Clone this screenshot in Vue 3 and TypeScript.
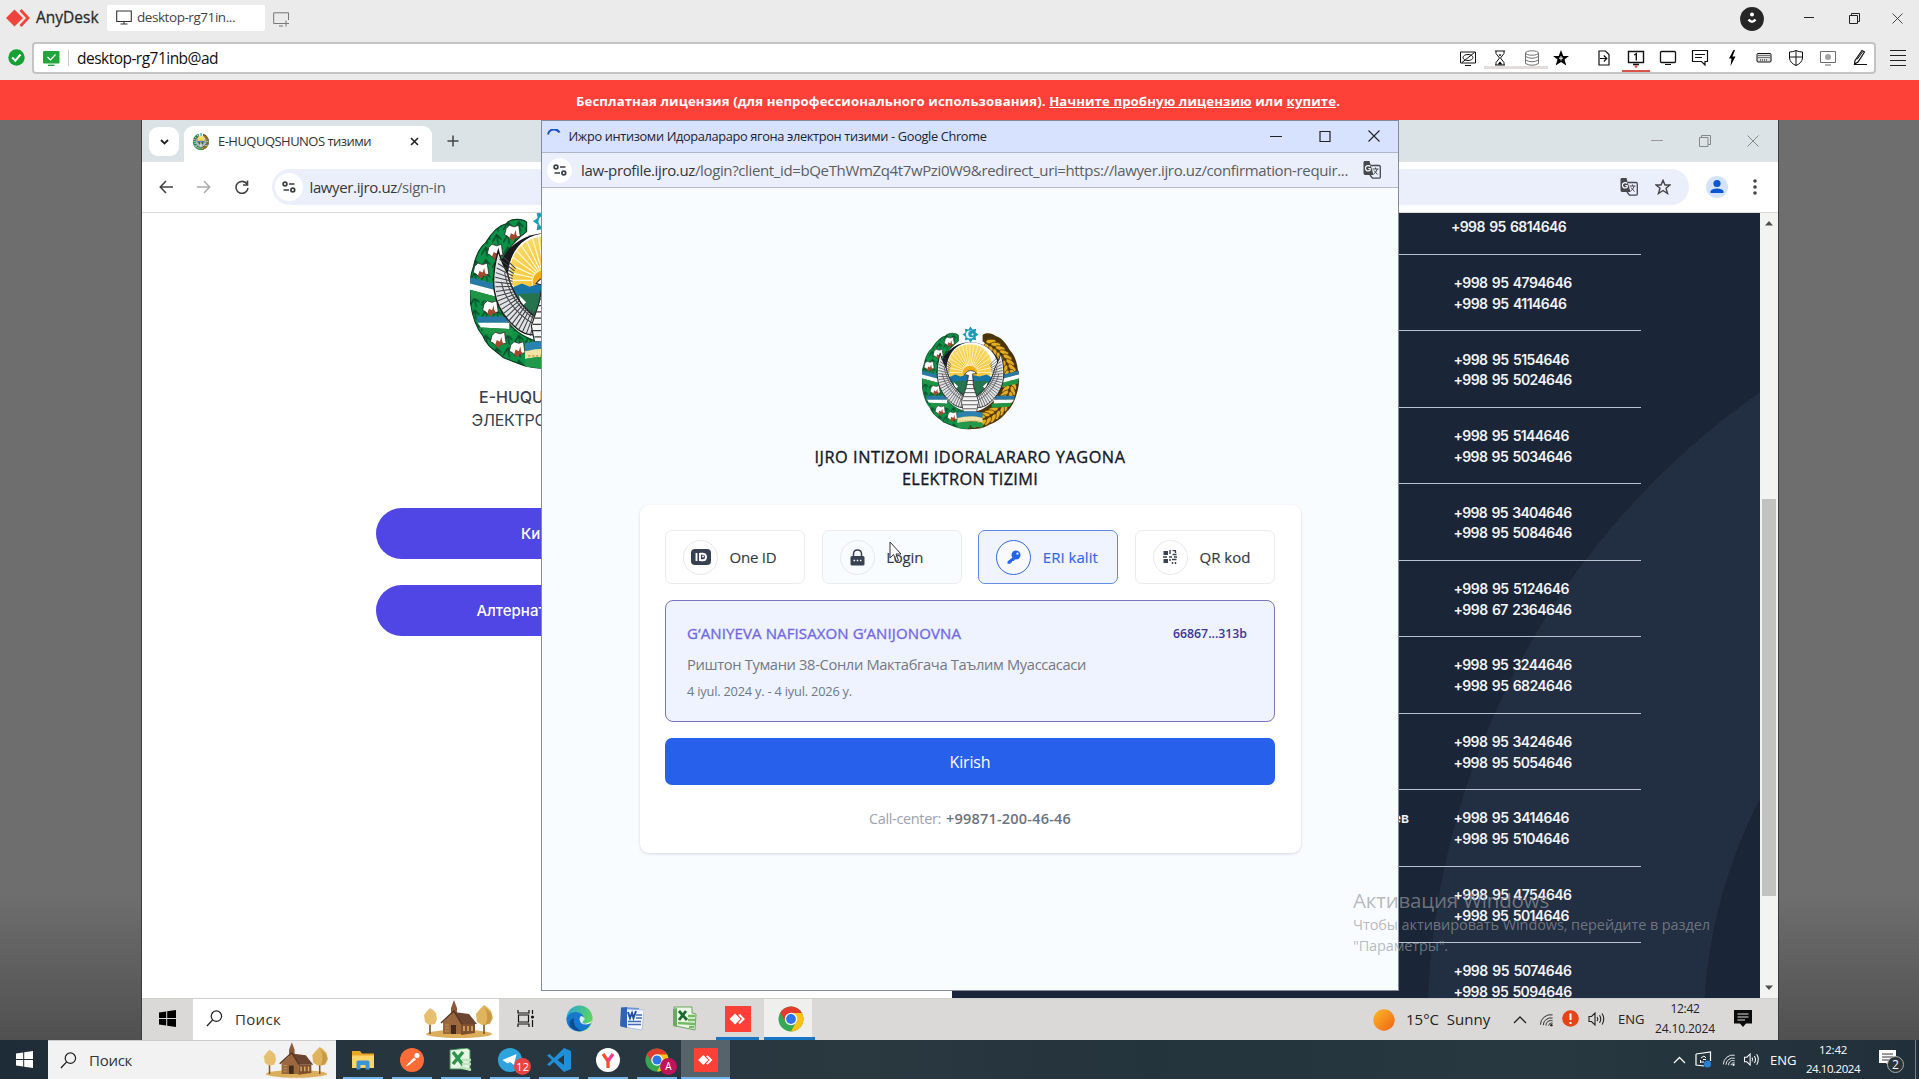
<script setup lang="ts">
import type { DirectiveBinding } from 'vue'

// Spreads a label over a given width by adjusting its letter spacing.
const vFit = {
  mounted(el: HTMLElement, binding: DirectiveBinding<number>) {
    const natural = el.getBoundingClientRect().width
    const count = (el.textContent ?? '').trim().length || 1
    el.style.letterSpacing = `${(binding.value - natural) / count}px`
  },
}

interface PhoneRow {
  name?: string
  phones: string[]
}

const rows: PhoneRow[] = [
  { phones: ['+998 95 4794646', '+998 95 4114646'] },
  { phones: ['+998 95 5154646', '+998 95 5024646'] },
  { phones: ['+998 95 5144646', '+998 95 5034646'] },
  { phones: ['+998 95 3404646', '+998 95 5084646'] },
  { phones: ['+998 95 5124646', '+998 67 2364646'] },
  { phones: ['+998 95 3244646', '+998 95 6824646'] },
  { phones: ['+998 95 3424646', '+998 95 5054646'] },
  { name: 'ев', phones: ['+998 95 3414646', '+998 95 5104646'] },
  { phones: ['+998 95 4754646', '+998 95 5014646'] },
  { phones: ['+998 95 5074646', '+998 95 5094646'] },
]

const phoneWidth = (phone: string): number => 118 - 2.6 * phone.split('1').length + 2.6

const methods = [
  { id: 'one', label: 'One ID', width: 47, state: '' },
  { id: 'lock', label: 'Login', width: 37, state: 'hover' },
  { id: 'key', label: 'ERI kalit', width: 55, state: 'active' },
  { id: 'qr', label: 'QR kod', width: 51, state: '' },
]

// Emblem geometry
const rays = Array.from({ length: 19 }, (_, i) => {
  const a = Math.PI + (i * Math.PI) / 18
  return { x: 47.5 + 24 * Math.cos(a), y: 46 + 30 * Math.sin(a) }
})
const feathers = Array.from({ length: 25 }, (_, i) => {
  const t = i / 24
  const a = Math.PI * (1.14 - t * 0.64)
  return {
    x1: 48 + 21 * Math.cos(a), y1: 47 + 20 * Math.sin(a),
    x2: 48 + 32 * Math.cos(a + 0.06), y2: 47 + 36 * Math.sin(a + 0.06),
  }
})
const cotton = [[27, 16], [16, 28], [7, 40], [13, 64], [18, 84], [30, 90]]
const starPoints = Array.from({ length: 16 }, (_, i) => {
  const r = i % 2 ? 5.4 : 8
  const a = (i * Math.PI) / 8
  return `${48 + r * Math.sin(a)},${8.5 - r * Math.cos(a)}`
}).join(' ')
const wheat = Array.from({ length: 40 }, (_, i) => {
  const k = Math.floor(i / 2)
  const outer = i % 2
  const a = -1.08 + (k / 19) * 2.5
  const r = outer ? 43 : 36
  return {
    x: 48 + r * Math.cos(a), y: 54 + r * Math.sin(a) * 1.02,
    rot: (a * 180) / Math.PI + (outer ? 60 : 120),
  }
})
</script>

<template>
  <div class="screen">
    <svg class="defs" width="0" height="0">
      <defs>
        <pattern id="leaf" width="7" height="8" patternUnits="userSpaceOnUse">
          <rect width="7" height="8" fill="#0b9347" />
          <path d="M0 6L3 1L6 4M3 1L4 7" stroke="#07502b" stroke-width="1" fill="none" />
        </pattern>
        <radialGradient id="sunsky" cx=".5" cy=".6" r=".7">
          <stop offset="0" stop-color="#f6bd22" /><stop offset="1" stop-color="#fae27a" />
        </radialGradient>
        <clipPath id="disc"><circle cx="47.5" cy="40" r="22" /></clipPath>
        <linearGradient id="edgeA" x1="0" y1="0" x2="1" y2=".5">
          <stop offset="0" stop-color="#2aa4dd" /><stop offset="1" stop-color="#5bd75a" />
        </linearGradient>
        <linearGradient id="sunny" x1="0" y1="0" x2="1" y2="1">
          <stop offset="0" stop-color="#fbb829" /><stop offset="1" stop-color="#f06411" />
        </linearGradient>
      </defs>
      <symbol id="emblem" viewBox="0 0 96 103">
        <path d="M36 9C34 7 26 6 23 10C18 11 13 17 10 22C5 26 3 33 2 38C-1 46 0 52 0 58C1 67 3 75 8 81C11 89 17 91 21 95C29 98 35 102 48 102L50 86C30 84 17 70 17 50C17 35 24 24 36 15Z" fill="url(#leaf)" stroke="#0b3a20" stroke-width=".7" />
        <path d="M60 9C63 6 70 7 73 10C80 12 84 19 87 24C92 29 94 36 95 44C97 52 96 60 94 66C92 74 89 80 84 85C79 92 72 96 66 98C60 102 54 102 48 102L46 86C66 84 79 70 79 50C79 35 72 24 60 15Z" fill="#4a350a" />
        <ellipse v-for="(w, i) in wheat" :key="'w' + i" :cx="w.x" :cy="w.y" rx="5" ry="2.2" fill="#e6ae1e" stroke="#4f3606" stroke-width=".7" :transform="`rotate(${w.rot} ${w.x} ${w.y})`" />
        <path d="M0 44L19 49V53L0 48Z" fill="#2878a8" /><path d="M0 48L19 53V57L0 52Z" fill="#fff" /><path d="M0 52L19 57V61L1 57Z" fill="#1f9545" />
        <path d="M4 69H24V73H5Z" fill="#2878a8" /><path d="M5 73H25V77L7 76Z" fill="#fff" /><path d="M7 76L27 77V81L10 80Z" fill="#1f9545" />
        <path d="M96 44L77 49V53L96 48Z" fill="#2878a8" /><path d="M96 48L77 53V57L96 52Z" fill="#fff" /><path d="M96 52L77 57V61L95 57Z" fill="#1f9545" />
        <path d="M92 69H72V73H91Z" fill="#2878a8" /><path d="M91 73H71V77L89 76Z" fill="#fff" /><path d="M89 76L69 77V81L86 80Z" fill="#1f9545" />
        <g v-for="(c, i) in cotton" :key="'c' + i">
          <path :transform="`translate(${c[0]} ${c[1]})`" d="M-4 -3L-2 -5L1 -4L4 -5L4.500 -1L5 2L1 3Q-1 5 -3 2L-5 1Z" fill="#fff" stroke="#222" stroke-width=".5" />
          <path :transform="`translate(${c[0]} ${c[1]})`" d="M-2 3L-1 0L1 1L2 -2L2.500 1L4 3L1.500 3L0 5Z" fill="#a3492d" />
        </g>
        <circle cx="47.8" cy="47" r="31" fill="#17191c" />
        <path d="M48.500 16C68 17 77 32 76 48C74 66 62 75 48 77C34 74 25 64 24 46C24 28 33 17 48.500 16Z" fill="#fff" />
        <g clip-path="url(#disc)">
          <rect x="22" y="16" width="52" height="52" fill="url(#sunsky)" />
          <path v-for="(r, i) in rays" :key="'r' + i" :d="`M47.5 46L${r.x} ${r.y}`" stroke="#fff8d8" stroke-width=".8" />
          <circle cx="47.5" cy="47" r="8" fill="#f3ae1a" stroke="#fff1ab" stroke-width=".8" />
        </g>
        <path d="M26 51L33 48L38 50L44 48L52 49L57 50L64 48L71 52V59H26Z" fill="#1775a6" />
        <path d="M26 56Q36 53 47 55Q60 53 71 56L67 68L55 73H42L30 68Z" fill="#24744d" />
        <path d="M32 57L35 60L33 62ZM64 57L61 60L63 62Z" stroke="#fff" fill="#fff" />
        <g v-for="side in [1, -1]" :key="'s' + side" :transform="side === 1 ? '' : 'translate(96 0) scale(-1 1)'">
          <path d="M18 27C13 45 13 62 28 75C34 81 41 82 46 79L46 72C36 67 27 56 24 42C21 36 19 31 18 27Z" fill="#e2e3e5" stroke="#1a1a1a" stroke-width=".9" />
          <path v-for="(f, i) in feathers" :key="i" :d="`M${f.x1} ${f.y1}L${f.x2} ${f.y2}`" stroke="#3b3d40" stroke-width=".65" />
          <path d="M22 41C24 54 32 66 45 73M20 47C22 59 32 70 45 76" stroke="#4a4c4f" stroke-width=".7" fill="none" />
        </g>
        <path d="M42 48Q45 44 48 44L52 45L54 47L50 47.500L51 60L56 75L54 85H41L39 75L44 60L46 49Z" fill="#f5f5f5" stroke="#222" stroke-width=".7" />
        <path d="M44 54h7M44 58h7M43 62h10M42 66h11M41 70h13M40 74h15M40 78h15M41 82h13" stroke="#3b3b3b" stroke-width=".8" />
        <path d="M35 86Q48 83 60 86V91Q48 88 35 91Z" fill="#2a82b0" />
        <path d="M35 91Q48 88 60 91V95.500Q48 93 35 96Z" fill="#efe3a9" />
        <path d="M35 96Q48 93 60 96V101Q55 99 50 101L48 98L45 102L35 101Z" fill="#21984a" />
        <path d="M37 94H58" stroke="#c8ae50" stroke-width="1" stroke-dasharray="1.5 1" />
        <polygon :points="starPoints" fill="#149fb6" />
        <circle cx="47.500" cy="8.500" r="4" fill="#e9f7fa" /><circle cx="49" cy="8" r="3.200" fill="#149fb6" /><circle cx="50" cy="8.500" r="1" fill="#fff" />
      </symbol>
      <symbol id="church" viewBox="0 0 71 38">
        <ellipse cx="36" cy="34" rx="33" ry="4" fill="#dcae5b" />
        <path d="M7 22V34M61 21V34" stroke="#7b5326" stroke-width="1.600" />
        <path d="M7 8L4 11L1 15L2 22L6 25L12 24L14 19L13 13L10 10Z" fill="#e6c06e" />
        <path d="M61 5L57 9L53 14L54 22L59 25L67 24L70 18L68 11L64 7Z" fill="#dfb45c" />
        <path d="M61 7C65 12 65 20 62 25C68 24 70 18 68 13Z" fill="#c99843" />
        <path d="M31 0L34 8V16H28V8Z" fill="#8d5b39" />
        <path d="M20 22L31 12L38 22V34H20Z" fill="#9b683d" />
        <path d="M31 12L46 14L54 24H38Z" fill="#6b4530" />
        <path d="M38 24H52V33L38 35Z" fill="#80502e" />
        <path d="M18 23L31 11L39 24" fill="none" stroke="#5b3827" stroke-width="1.600" />
        <path d="M28 25h5v9h-5Z" fill="#442a1b" /><path d="M41 26v5M45 26v5M49 26v5" stroke="#e0b06c" stroke-width="1.500" />
        <path d="M22 25h4M22 28h4M22 31h4" stroke="#c58e59" />
      </symbol>
      <symbol id="chrome" viewBox="0 0 26 26">
        <circle cx="13" cy="13" r="12.500" fill="#34a853" />
        <path d="M13 13L2.200 6.700A12.500 12.500 0 0 1 23.800 6.700Z" fill="#e33b2e" />
        <path d="M13 7H24A12.500 12.500 0 0 1 13 25.500L18.500 15Z" fill="#fbc116" />
        <path d="M2.200 6.700L7.800 16L13 7Z" fill="#e33b2e" />
        <circle cx="13" cy="13" r="6.200" fill="#fff" /><circle cx="13" cy="13" r="4.900" fill="#2c76e8" />
      </symbol>
      <symbol id="anydesk" viewBox="0 0 26 26">
        <rect width="26" height="26" fill="#fb4035" /><path d="M4.500 13L10 7.500L15.500 13L10 18.500Z" fill="#fff" />
        <path d="M14 8.500L18.500 13L14 17.500" stroke="#fff" stroke-width="2" fill="none" />
      </symbol>
      <symbol id="translate" viewBox="0 0 18 18">
        <path d="M1.500 0H6.500L10.500 14H2Q.5 14 .5 12V1.500Q.5 0 1.500 0Z" fill="#46494d" />
        <path d="M8 4.500H16Q17.300 4.500 17.300 6V16Q17.300 17.200 16 17.200H9.500L7 14" fill="none" stroke="#46494d" stroke-width="1.300" />
        <path d="M7.200 5.500A2.700 2.700 0 1 0 7.200 9V7.500H5.200" fill="none" stroke="#fff" stroke-width="1.200" />
        <path d="M9.500 8H15.500M12.500 6.500V8M14.300 8Q13 12 10.500 13M11 9.500L14.500 13.500" fill="none" stroke="#46494d" stroke-width="1" />
      </symbol>
      <symbol id="tune" viewBox="0 0 14 12">
        <g fill="none" stroke="#3c4043" stroke-width="1.700"><circle cx="3" cy="3" r="1.900" /><path d="M7 3H12.500M1.500 9H7" /><circle cx="10.800" cy="9" r="1.900" /></g>
      </symbol>
      <symbol id="wifi" viewBox="0 0 16 16">
        <g fill="none" stroke="currentColor" stroke-width="1"><path d="M1.500 13A11 11 0 0 1 14.500 2.500" /><path d="M4.500 13.500A8 8 0 0 1 14.500 6" /><path d="M7.500 14A5 5 0 0 1 14.500 9" /><path d="M10.300 14A3 3 0 0 1 14.500 11.500" /></g>
        <circle cx="13.200" cy="13.500" r="1.300" fill="currentColor" />
      </symbol>
      <symbol id="speaker" viewBox="0 0 18 16">
        <path d="M1 5.500H3.500L7 2V14L3.500 10.500H1Z M9 6Q10.500 8 9 10M11.500 4.200Q14 8 11.500 11.800M14 2.500Q17.500 8 14 13.500" fill="none" stroke="currentColor" stroke-width="1.100" />
      </symbol>
      <symbol id="magnifier" viewBox="0 0 18 18">
        <circle cx="11" cy="6.500" r="5.500" fill="none" stroke="#222" stroke-width="1.300" /><path d="M7 10.500L1 17" stroke="#222" stroke-width="1.400" />
      </symbol>
      <symbol id="windows" viewBox="0 0 17 17">
        <path d="M0 2.500L7.200 1.400V8H0ZM8.200 1.200L17 0V8H8.200ZM0 9H7.200V15.600L0 14.500ZM8.200 9H17V17L8.200 15.800Z" fill="currentColor" />
      </symbol>
    </svg>

    <!-- AnyDesk frame -->
    <header class="frame">
      <div class="titlebar">
        <svg class="brand-mark" width="24" height="18" viewBox="0 0 24 18"><path d="M0 9L8.500 .5L17 9L8.500 17.500Z" fill="#ef443b" /><path d="M14.500 1L22 9L14.500 17" fill="none" stroke="#ef443b" stroke-width="2.800" /></svg>
        <span v-fit="60" class="brand">AnyDesk</span>
        <div class="session-tab">
          <svg width="16" height="15" viewBox="0 0 16 15"><path d="M.7 1H15.300V11.500H.7ZM8 11.500V14M4.500 14H11.500" fill="none" stroke="#333" stroke-width="1.100" /></svg>
          <span v-fit="98">desktop-rg71in...</span>
        </div>
        <svg class="new-session" width="17" height="15" viewBox="0 0 17 15"><path d="M11 11.500H.7V.8H15.500V8M6 14H10M13 8.500V14.500M10.500 11.500H16" fill="none" stroke="#777" /></svg>
        <div class="host-controls">
          <svg width="26" height="26" viewBox="0 0 26 26"><circle cx="13" cy="13" r="11.900" fill="#262626" /><circle cx="13" cy="8.500" r="2" fill="#fff" /><path d="M9.500 13.500Q13 18 16.500 13.500" fill="none" stroke="#fff" stroke-width="2.600" /></svg>
          <svg class="c-min" width="10" height="12" viewBox="0 0 10 12"><path d="M0 5.500H10" stroke="#222" /></svg>
          <svg class="c-res" width="11" height="11" viewBox="0 0 11 11"><path d="M.5 2.500H8.500V10.500H.5ZM2.500 2.500V.5H10.500V8.500H8.500" fill="none" stroke="#222" /></svg>
          <svg class="c-close" width="11" height="11" viewBox="0 0 11 11"><path d="M.5 .5L10.500 10.500M10.500 .5L.5 10.500" stroke="#333" stroke-width=".9" /></svg>
        </div>
      </div>
      <div class="address-row">
        <svg class="ok" width="17" height="17" viewBox="0 0 17 17"><circle cx="8.500" cy="8.500" r="8.200" fill="#17a034" /><path d="M4.200 8.500L7.300 11.700L12.500 5.500" fill="none" stroke="#fff" stroke-width="2" /></svg>
        <div class="address">
          <svg width="17" height="15" viewBox="0 0 17 15"><rect width="16.500" height="12.500" rx="1" fill="#21a63b" /><path d="M4.500 6L7.500 9L12.500 3.500" fill="none" stroke="#fff" stroke-width="1.200" /><path d="M5 14.300H11.500" stroke="#21a63b" stroke-width="1.400" /></svg>
          <i class="bar"></i>
          <span v-fit="141" class="host">desktop-rg71inb@ad</span>
          <div class="tools">
            <b><svg viewBox="0 0 20 20"><path d="M2.500 4H17.500V15H2.500ZM7 17.500H13M4 14.500L16.500 4.500" /><ellipse cx="10" cy="9.500" rx="5" ry="3" /></svg></b>
            <b class="shade"><svg viewBox="0 0 20 20"><path d="M5 3H15M5 17H15M6 3V5.500L9.500 10L6 14.500V17M14 3V5.500L10.500 10L14 14.500V17" /><path d="M7.500 16.500L10 13.500L12.500 16.500ZM8.500 6.500H11.500L10 8.500Z" fill="#000" stroke="none" /></svg></b>
            <b class="shade dim"><svg viewBox="0 0 20 20"><ellipse cx="10" cy="5" rx="6.500" ry="2.200" /><path d="M3.500 5V15.500Q10 19 16.500 15.500V5M3.500 8.500Q10 12 16.500 8.500M3.500 12Q10 15.500 16.500 12" /></svg></b>
            <b class="star"><svg viewBox="0 0 20 20"><path d="M10 2L12.300 8H18L13.500 11.500L15.300 17.500L10 14L4.700 17.500L6.500 11.500L2 8H7.700Z" fill="#000" stroke="none" /><path d="M10 8V12.500M8 10.200H12" stroke="#fff" /></svg></b>
            <b class="gap"><svg viewBox="0 0 20 20"><path d="M5 3H11.500L15 6.500V17H5ZM6 10.500H12.500M9.800 7.500L12.800 10.500L9.800 13.500" stroke-width="1.200" /></svg></b>
            <b class="current"><svg viewBox="0 0 20 20"><path d="M2.500 3.500H17.500V14.500H2.500ZM7 16.500H13M8.200 7L10.300 5.800V12.500" stroke-width="1.400" /><circle cx="10" cy="18.500" r="1.300" fill="#d94b41" stroke="none" /></svg></b>
            <b><svg viewBox="0 0 20 20"><rect x="2.500" y="3.500" width="15" height="11" rx="1" stroke-width="1.300" /><path d="M7 16.500H13" /></svg></b>
            <b><svg viewBox="0 0 20 20"><path d="M2.500 2.500H17.500V13.500H15V17L11.500 13.500H2.500ZM5 6.500H15M5 9.500H12" stroke-width="1.200" /></svg></b>
            <b><svg viewBox="0 0 20 20"><path d="M11.500 2L7 10.500H9.500L8.500 18L13.500 8.500H10.500L13 2Z" fill="#000" stroke="none" /></svg></b>
            <b><svg viewBox="0 0 20 20"><rect x="3" y="5.500" width="14" height="8.500" rx="1" fill="#ddd" /><path d="M4.500 7.500H15.500M4.500 9.500H15.500M6 12H14" stroke-dasharray="1 1" /></svg></b>
            <b><svg viewBox="0 0 20 20"><path d="M3.500 4Q7 4 10 2.500Q13 4 16.500 4V10Q16 15 10 17.500Q4 15 3.500 10ZM10 2.500V17.500M3.500 9H16.500" /></svg></b>
            <b class="dim"><svg viewBox="0 0 20 20"><path d="M2.500 3.500H17.500V14.500H2.500ZM7 17H13" /><circle cx="10" cy="9" r="3" fill="#666" stroke="none" /></svg></b>
            <b><svg viewBox="0 0 20 20"><path d="M5 12.500L12 2.500L14.500 4L8 14L4.500 16ZM4 16.500H17" stroke-width="1.200" /><path d="M7 11.500L12.500 4" /></svg></b>
          </div>
        </div>
        <svg class="burger" width="16" height="17" viewBox="0 0 16 17"><path d="M0 .5H16M0 5.500H16M0 10.500H16M0 15.500H16" stroke="#222" stroke-width="1" /></svg>
      </div>
      <div class="license"><span v-fit="764">Бесплатная лицензия (для непрофессионального использования). <u>Начните пробную лицензию</u> или <u>купите</u>.</span></div>
    </header>

    <!-- Remote desktop -->
    <main class="stage">
      <section class="remote">
        <div class="tabstrip">
          <span class="tab-search"><svg width="9" height="6" viewBox="0 0 9 6"><path d="M1 1L4.500 4.500L8 1" fill="none" stroke="#222" stroke-width="1.800" /></svg></span>
          <div class="tab">
            <svg width="16" height="17"><use href="#emblem" /></svg>
            <span v-fit="153">E-HUQUQSHUNOS тизими</span>
            <svg class="x" width="9" height="9" viewBox="0 0 9 9"><path d="M1 1L8 8M8 1L1 8" stroke="#222" stroke-width="1.600" /></svg>
          </div>
          <svg class="plus" width="12" height="12" viewBox="0 0 12 12"><path d="M6 .5V11.500M.5 6H11.500" stroke="#444" stroke-width="1.500" /></svg>
          <div class="wincontrols">
            <svg width="12" height="12" viewBox="0 0 12 12"><path d="M0 5.500H12" stroke="#999" /></svg>
            <svg width="12" height="12" viewBox="0 0 12 12"><path d="M.5 2.500H9V11.500H.5ZM2.500 2.500V.5H11.500V9.500H9" fill="none" stroke="#888" /></svg>
            <svg width="12" height="12" viewBox="0 0 12 12"><path d="M.5 .5L11.500 11.500M11.500 .5L.5 11.500" stroke="#888" /></svg>
          </div>
        </div>
        <div class="toolbar">
          <svg class="nav" width="14" height="14" viewBox="0 0 14 14"><path d="M14 7H1.500M7 1L1.300 7L7 13" fill="none" stroke="#444" stroke-width="1.600" /></svg>
          <svg class="nav" width="14" height="14" viewBox="0 0 14 14"><path d="M0 7H12.500M7 1L12.700 7L7 13" fill="none" stroke="#aaa" stroke-width="1.500" /></svg>
          <svg class="nav" width="14" height="14" viewBox="0 0 14 14"><path d="M12 4A6 6 0 1 0 13 8M12.500 .5V5H8" fill="none" stroke="#444" stroke-width="1.600" /></svg>
          <div class="omnibox">
            <span class="site"><svg width="14" height="12"><use href="#tune" /></svg></span>
            <span v-fit="136" class="url">lawyer.ijro.uz<em>/sign-in</em></span>
            <svg class="tr" width="18" height="18"><use href="#translate" /></svg>
            <svg width="16" height="16" viewBox="0 0 16 16"><path d="M8 1.300L10 6H15L11 9.300L12.500 14.500L8 11.500L3.500 14.500L5 9.300L1 6H6Z" fill="none" stroke="#444" stroke-width="1.400" /></svg>
          </div>
          <svg class="avatar" width="22" height="22" viewBox="0 0 22 22"><circle cx="11" cy="11" r="11" fill="#d3e3fd" /><circle cx="11" cy="7.500" r="3.600" fill="#0b57d0" /><path d="M4.500 17V15Q6 12.500 11 12.500Q16 12.500 17.500 15V17Z" fill="#0b57d0" /></svg>
          <svg class="dots" width="4" height="16" viewBox="0 0 4 16"><circle cx="2" cy="2" r="1.800" fill="#444" /><circle cx="2" cy="8" r="1.800" fill="#444" /><circle cx="2" cy="14" r="1.800" fill="#444" /></svg>
        </div>

        <div class="page">
          <div class="signin">
            <svg class="big-emblem" width="151" height="162"><use href="#emblem" /></svg>
            <p class="sys"><span>E-HUQUQSHUNOS</span></p>
            <p class="sys thin"><span>ЭЛЕКТРОН ТИЗИМИ</span></p>
            <div class="cta first"><span>Кириш</span></div>
            <div class="cta"><span>Алтернатив кириш</span></div>
          </div>
          <div class="contacts">
            <div class="row head"><div class="phones"><span v-fit="115">+998 95 6814646</span></div></div>
            <div v-for="(row, i) in rows" :key="i" class="row">
              <div class="who">{{ row.name }}</div>
              <div class="phones"><span v-for="p in row.phones" :key="p" v-fit="phoneWidth(p)">{{ p }}</span></div>
            </div>
          </div>
          <div class="scrollbar">
            <svg width="10" height="6" viewBox="0 0 10 6"><path d="M1 5.500L5 1L9 5.500Z" fill="#505050" /></svg>
            <i></i>
            <svg width="10" height="6" viewBox="0 0 10 6"><path d="M1 .5L5 5L9 .5Z" fill="#505050" /></svg>
          </div>
        </div>

        <div class="taskbar remote-bar">
          <span class="start"><svg width="17" height="17"><use href="#windows" /></svg></span>
          <div class="search">
            <svg width="17" height="17"><use href="#magnifier" /></svg><span v-fit="46">Поиск</span>
            <svg class="church" width="71" height="38"><use href="#church" /></svg>
          </div>
          <div class="apps">
            <b class="taskview"><svg width="18" height="17" viewBox="0 0 18 17"><path d="M1 0V3H12V0M1 17V14H12V17M1.500 5H11.500V12H1.500ZM15.500 0V4M15.500 10V17" fill="none" stroke="#111" stroke-width="1.200" /><circle cx="15.500" cy="7" r="1.600" fill="#111" /></svg></b>
            <b><svg width="27" height="27" viewBox="0 0 27 27"><circle cx="13.500" cy="13.500" r="13" fill="url(#edgeA)" /><path d="M.5 14Q2 7 10 7Q18 8 18 14Q18 16 16 17Q19 20 25 18Q21 26.500 13 26.500Q1 25 .5 14Z" fill="#1678cf" /><path d="M8 13Q6 22 16 26Q8 26.500 4 21Q2 15 8 13Z" fill="#0d4d94" /><path d="M15 11Q19 12 18.500 14.500Q17 16 16.500 17.500Q19 20 26 16L25 18Q19 21 15 18Q12 14 15 11Z" fill="#fff" opacity=".85" /></svg></b>
            <b><svg width="24" height="25" viewBox="0 0 24 25"><path d="M1 1L19 2V22L1 21Z" fill="#6d92ce" /><path d="M5 3L24 4L22 24L4 21Z" fill="#f6f9ff" stroke="#9db3d8" stroke-width=".7" /><path d="M1 2L7 1V22L0 20Z" fill="#3162b4" /><path d="M8 6L10 12L12 7L13.500 12L16 5" fill="none" stroke="#234f9f" stroke-width="2" /><path d="M16 9H22M16 12H22M8 15.500H21M8 18.500H21" stroke="#426bb4" stroke-width="1.300" /></svg></b>
            <b><svg width="24" height="25" viewBox="0 0 24 25"><path d="M1 1H19V7L23 8L22 24L3 20Z" fill="#eaf6e8" stroke="#6aa763" /><path d="M0 3L4 2V21L0 20Z" fill="#68ad5c" /><path d="M6 5L14 14M13 5L6 14" stroke="#1d6930" stroke-width="2.800" /><path d="M15 10H22M15 14H22M5 17L22 18M16 21H21" stroke="#77ba64" stroke-width="2.400" /></svg></b>
            <b class="run"><svg width="26" height="26"><use href="#anydesk" /></svg></b>
            <b class="run on"><svg width="26" height="26"><use href="#chrome" /></svg></b>
          </div>
          <div class="tray">
            <svg width="22" height="22" viewBox="0 0 22 22"><circle cx="11" cy="11" r="10.700" fill="url(#sunny)" /></svg>
            <span v-fit="81" class="weather">15°C&nbsp; Sunny</span>
            <svg class="caret" width="14" height="9" viewBox="0 0 14 9"><path d="M1 8L7 2L13 8" fill="none" stroke="#222" stroke-width="1.300" /></svg>
            <svg class="wifi" width="15" height="16"><use href="#wifi" /></svg>
            <svg class="warn" width="17" height="17" viewBox="0 0 17 17"><circle cx="8.500" cy="8.500" r="8.300" fill="#e64418" /><path d="M8.500 3.500V10M8.500 12V14" stroke="#fff" stroke-width="2" /></svg>
            <svg class="vol" width="18" height="16"><use href="#speaker" /></svg>
            <span v-fit="24" class="lang">ENG</span>
            <div class="clock"><span v-fit="29">12:42</span><span v-fit="60">24.10.2024</span></div>
            <svg class="note" width="18" height="17" viewBox="0 0 18 17"><path d="M0 0H18V13.500H12L9 17L6 13.500H0Z" fill="#0b0b0b" /><path d="M3.500 4H14.500M3.500 7H14.500M3.500 10H11" stroke="#ddd" stroke-width="1.100" /></svg>
          </div>
        </div>
      </section>

      <!-- Login popup window -->
      <section class="popup">
        <div class="ptitle">
          <svg class="spin" width="14" height="14" viewBox="0 0 14 14"><path d="M1 5.500A6.200 6.200 0 0 1 12.500 3.500" fill="none" stroke="#1a55c8" stroke-width="2.100" /></svg>
          <span v-fit="418">Ижро интизоми Идоралараро ягона электрон тизими - Google Chrome</span>
          <div class="pcontrols">
            <svg width="12" height="12" viewBox="0 0 12 12"><path d="M0 6.500H12" stroke="#222" /></svg>
            <svg width="12" height="12" viewBox="0 0 12 12"><path d="M1 1.500H11V11.500H1Z" fill="none" stroke="#222" stroke-width="1.200" /></svg>
            <svg width="12" height="12" viewBox="0 0 12 12"><path d="M.5 .5L11.500 11.500M11.500 .5L.5 11.500" stroke="#222" stroke-width="1.100" /></svg>
          </div>
        </div>
        <div class="purl">
          <span class="site"><svg width="14" height="12"><use href="#tune" /></svg></span>
          <span v-fit="767" class="url">law-profile.ijro.uz<em>/login?client_id=bQeThWmZq4t7wPzi0W9&amp;redirect_uri=https://lawyer.ijro.uz/confirmation-requir...</em></span>
          <svg class="tr" width="18" height="18"><use href="#translate" /></svg>
        </div>
        <div class="login">
          <svg width="97" height="104"><use href="#emblem" /></svg>
          <h1><span v-fit="311">IJRO INTIZOMI IDORALARARO YAGONA</span><span v-fit="136">ELEKTRON TIZIMI</span></h1>
          <div class="card">
            <div class="methods">
              <div v-for="m in methods" :key="m.id" class="method" :class="m.state">
                <span class="ring">
                  <svg v-if="m.id === 'one'" width="20" height="16" viewBox="0 0 20 16"><rect width="20" height="16" rx="4" fill="#374151" /><path d="M5.500 4V12M9 4V12M9 4.700H12Q15 5 15 8Q15 11.300 12 11.300H9.500" fill="none" stroke="#fff" stroke-width="1.900" /><circle cx="12" cy="7.500" r="1" fill="#fff" /></svg>
                  <svg v-else-if="m.id === 'lock'" width="15" height="17" viewBox="0 0 15 17"><path d="M3.500 8V5Q3.500 1 7.500 1Q11.500 1 11.500 5V8" fill="none" stroke="#374151" stroke-width="1.500" /><rect x=".5" y="7" width="14" height="9.500" rx="1.500" fill="#374151" /><path d="M3.500 11.500h1.600M6.700 11.500h1.600M9.900 11.500h1.600" stroke="#fff" stroke-width="1.500" /></svg>
                  <svg v-else-if="m.id === 'key'" width="14" height="14" viewBox="0 0 14 14"><path d="M5.500 7.500L.5 11.500V13.800H3.500V12.500H5V11H6.500L8 9.500" fill="#2563eb" /><circle cx="9" cy="5" r="4.500" fill="#2563eb" /><circle cx="10.500" cy="3.700" r="1.100" fill="#fff" /></svg>
                  <svg v-else width="14" height="14" viewBox="0 0 14 14"><path d="M.5 1H5V5H.5ZM.5 9H5V13H.5Z" fill="#374151" /><path d="M7 0V4M9.500 .5H13M9.500 4.500H13.500M12.500 1V3M0 7H4M6 7H9M11 7H14M7 9V11M9 9.500H13.500M9.500 12V14M12.500 12V14" stroke="#374151" stroke-width="1.400" /></svg>
                </span>
                <span v-fit="m.width" class="mlabel">{{ m.label }}</span>
              </div>
            </div>
            <div class="cert">
              <div class="cert-top"><strong v-fit="274">G‘ANIYEVA NAFISAXON G‘ANIJONOVNA</strong><small v-fit="71">66867...313b</small></div>
              <p><span v-fit="399">Риштон Тумани 38-Сонли Мактабгача Таълим Муассасаси</span></p>
              <p class="dates"><span v-fit="165">4 iyul. 2024 y. - 4 iyul. 2026 y.</span></p>
            </div>
            <div class="enter"><span v-fit="41">Kirish</span></div>
            <div class="call"><span v-fit="72">Call-center:</span><b v-fit="125">+99871-200-46-46</b></div>
          </div>
        </div>
      </section>

      <div class="watermark">
        <p class="big"><span v-fit="196">Активация Windows</span></p>
        <p><span v-fit="357">Чтобы активировать Windows, перейдите в раздел</span></p>
        <p><span v-fit="95">"Параметры".</span></p>
      </div>
      <svg class="cursor" width="13" height="22" viewBox="0 0 13 22"><path d="M1 1V17L4.500 13.500L7.500 20.500L9.500 19.500L7 13H12Z" fill="#fff" fill-opacity=".55" stroke="#333" /></svg>
    </main>

    <!-- Local taskbar -->
    <footer class="taskbar host-bar">
      <span class="start"><svg width="17" height="17"><use href="#windows" /></svg></span>
      <div class="search">
        <svg width="17" height="17"><use href="#magnifier" /></svg><span v-fit="43">Поиск</span>
        <svg class="church" width="66" height="36"><use href="#church" /></svg>
      </div>
      <div class="apps">
        <b class="run"><svg width="22" height="20" viewBox="0 0 22 20"><path d="M0 1H8L10 3.500H22V18H0Z" fill="#e9a825" /><path d="M0 5.500H22V18H0Z" fill="#fcd669" /><path d="M4.500 19.500V12Q4.500 10.500 6 10.500H16Q17.500 10.500 17.500 12V19.500H13.500V15H8.500V19.500Z" fill="#3a94d6" /></svg></b>
        <b class="run"><svg width="24" height="24" viewBox="0 0 24 24"><circle cx="12" cy="12" r="12" fill="#ff6c37" /><path d="M5.500 18.500L14 9.500L16 11.500L9 17Z" fill="#fff" /><circle cx="17" cy="7.500" r="2.500" fill="#fff" /></svg></b>
        <b class="run"><svg width="23" height="23" viewBox="0 0 23 23"><path d="M1 2L18 0L21 2V21H1Z" fill="#e6f5e4" stroke="#3e914f" /><path d="M4 4L14 17M14 4L4 16" stroke="#2e944b" stroke-width="3.500" /><path d="M13 12H22M13 16H22M11 19L22 22" stroke="#bfe3ba" stroke-width="2.500" /></svg></b>
        <b class="run"><svg width="24" height="24" viewBox="0 0 24 24"><circle cx="12" cy="12" r="12" fill="#2ea3dc" /><path d="M4.500 12L18.500 6L16 17L12 14L9.500 15.500Z" fill="#fff" /></svg><i class="count">12</i></b>
        <b class="run"><svg width="24" height="24" viewBox="0 0 24 24"><path d="M17 0L24 3V21L17 24L7 14L2.500 18L0 16.500L5 12L0 7.500L2.500 6L7 10ZM17 7L10.500 12L17 17Z" fill="#1f8fd8" fill-rule="evenodd" /></svg></b>
        <b class="run"><svg width="24" height="24" viewBox="0 0 24 24"><circle cx="12" cy="12" r="12" fill="#fff" /><path d="M7 6L12 13V20" fill="none" stroke="#fc4b27" stroke-width="3.200" /><path d="M12 13L17 6" stroke="#f53c91" stroke-width="3.200" /></svg></b>
        <b class="run"><svg width="24" height="24"><use href="#chrome" /></svg><i class="count acct">A</i></b>
        <b class="run on"><svg width="24" height="24"><use href="#anydesk" /></svg></b>
      </div>
      <div class="tray">
        <svg class="caret" width="13" height="8" viewBox="0 0 13 8"><path d="M1 7L6.500 1.500L12 7" fill="none" stroke="#fff" stroke-width="1.300" /></svg>
        <svg class="sync" width="17" height="17" viewBox="0 0 17 17"><path d="M1 3L15.500 1V10M9 15L1 14V3" fill="none" stroke="#fff" stroke-width="1.200" /><path d="M6 7L9 5L11 7M6 11H9M5.500 9V12M8 8.500H11" fill="none" stroke="#fff" /><circle cx="12.500" cy="13" r="3.600" fill="#2b7fd4" /></svg>
        <svg class="wifi" width="14" height="14"><use href="#wifi" /></svg>
        <svg class="vol" width="18" height="15"><use href="#speaker" /></svg>
        <span v-fit="23" class="lang">ENG</span>
        <div class="clock"><span v-fit="28">12:42</span><span v-fit="54">24.10.2024</span></div>
        <div class="note"><svg width="17" height="17" viewBox="0 0 17 17"><path d="M0 0H17V13H11V17L7 13H0Z" fill="#fff" /><path d="M3 4H14M3 7H14M3 10H11" stroke="#333" /></svg><i>2</i></div>
      </div>
    </footer>
  </div>
</template>

<style>
html, body { margin: 0; overflow: hidden; }
</style>

<style scoped>
* { box-sizing: border-box; }
.screen { width: 1919px; height: 1079px; overflow: hidden; display: flex; flex-direction: column; font-family: "Open Sans", "Noto Sans", sans-serif; position: relative; }
.defs { position: absolute; }
span, strong, small { white-space: nowrap; flex: none; }
svg { flex: none; display: block; }
p, h1 { margin: 0; }
em { font-style: normal; color: #5b5e63; }

.frame { height: 120px; flex: none; background: #ebebeb; }
.titlebar { height: 40px; display: flex; align-items: flex-start; padding-left: 6px; color: #2b2b2b; }
.brand-mark { margin-top: 9px; }
.brand { margin: 5px 0 0 6px; width: 60px; font-size: 15.5px; line-height: 24px; -webkit-text-stroke: .3px #2b2b2b; }
.session-tab { margin: 5px 0 0 11px; width: 158px; height: 26px; background: #fff; border-radius: 2px; display: flex; align-items: center; padding: 0 0 2px 9px; gap: 5px; font-size: 13.5px; color: #444; }
.new-session { margin: 12px 0 0 8px; }
.host-controls { margin-left: auto; display: flex; align-items: center; height: 36px; padding-right: 16px; }
.host-controls svg:first-child { margin-top: 2px; }
.c-min { margin-left: 39px; }
.c-res { margin-left: 35px; }
.c-close { margin-left: 32px; }
.address-row { height: 40px; display: flex; align-items: flex-start; padding-left: 8px; }
.ok { margin-top: 9px; }
.address { margin: 2px 0 0 7px; width: 1844px; height: 32px; border: 2px solid #c4c4c4; border-radius: 4px; background: #fff; display: flex; align-items: center; padding-left: 9px; color: #111; }
.bar { width: 1px; height: 16px; background: #c8c8c8; margin: 0 8px; }
.host { font-size: 15.5px; }
.tools { margin: 0 -1.5px 0 auto; display: flex; align-self: stretch; }
.tools b { width: 32px; display: flex; align-items: center; justify-content: center; }
.tools svg { width: 20px; height: 20px; fill: none; stroke: #111; stroke-width: 1; }
.tools .shade { background: linear-gradient(#e2dcdc, #e2dcdc) 0 22px / 100% 3px no-repeat; }
.tools .dim svg { opacity: .6; }
.tools .star { width: 27px; }
.tools .gap { margin-left: 13px; }
.tools .current { background: linear-gradient(#dc5348, #dc5348) 2px 26px / 28px 2px no-repeat; }
.burger { margin: 10px 0 0 14px; }
.license { height: 40px; background: #fd4038; color: #fff; font-weight: 700; font-size: 13.2px; line-height: 42px; display: flex; padding-left: 576px; }

.stage { height: 920px; flex: none; background: linear-gradient(#6e6e6e 0, #6e6e6e 84%, #505050 100%); position: relative; display: flex; padding-left: 141px; }
.remote { width: 1638px; height: 920px; border: 1px solid #3d3d3d; border-width: 0 1px; display: flex; flex-direction: column; overflow: hidden; background: #fff; }
.tabstrip { height: 42px; background: #dce3e7; display: flex; align-items: flex-start; padding-left: 7px; }
.tab-search { width: 30px; height: 29px; margin-top: 7px; background: #fff; border-radius: 9px; display: flex; align-items: center; justify-content: center; }
.tab { margin: 6px 0 0 5px; width: 248px; height: 36px; background: #fff; border-radius: 9px 9px 0 0; display: flex; align-items: center; padding: 0 13px 6px 9px; gap: 9px; font-size: 13px; color: #333; }
.tab .x { margin-left: auto; }
.plus { margin: 15px 0 0 15px; }
.wincontrols { margin: 15px 19px 0 auto; display: flex; gap: 36px; }
.toolbar { height: 51px; border-bottom: 1px solid #dcdad6; display: flex; align-items: center; padding: 0 21.5px 0 16.5px; }
.nav { margin-right: 24px; }
.omnibox { margin-left: -1px; width: 1417px; height: 36px; border-radius: 18px; background: #ebeefb; display: flex; align-items: center; padding: 0 17.5px 0 3px; }
.site { width: 28px; height: 28px; border-radius: 50%; background: #fff; display: flex; align-items: center; justify-content: center; }
.url { font-size: 15px; color: #33363a; margin-left: 7px; }
.omnibox .tr { margin: 0 17px 0 auto; }
.avatar { margin-left: 17px; }
.dots { margin-left: auto; }

.page { height: 785px; display: flex; overflow: hidden; }
.signin { width: 810px; padding-left: 234px; height: 785px; }
.big-emblem { margin: -5px 0 0 94px; }
.sys { font-family: Inter, sans-serif; font-size: 16px; line-height: 23px; font-weight: 500; color: #374151; padding-left: 103px; }
.big-emblem + .sys { margin-top: 16px; }
.thin { font-weight: 400; padding-left: 95.500px; letter-spacing: -.25px; }
.cta { width: 340px; height: 51px; border-radius: 26px; background: #4f46e5; color: #fff; font: 500 15px/51px Inter, sans-serif; text-align: center; margin-top: 26px; }
.cta.first { margin-top: 76px; }
.contacts { width: 808px; padding-right: 119px; background: radial-gradient(circle at 1253px 817px, #1a2638 501px, #222e42 502px 777px, #1a2638 778px); color: #f1f4f9; font: 600 14px/20.7px Inter, sans-serif; word-spacing: 1.500px; overflow: hidden; }
.row { height: 76.45px; border-bottom: 1px solid #b9c2d0; display: flex; padding-top: 18.300px; }
.row.head { height: 42px; padding: 4px 0 0 499px; }
.who { width: 457px; text-align: right; margin-right: 44.500px; }
.phones { display: flex; flex-direction: column; align-items: flex-start; }
.scrollbar { width: 18px; background: #f3f3f2; display: flex; flex-direction: column; align-items: center; padding: 7px 0; }
.scrollbar i { width: 14px; height: 397px; background: #c2c2c1; margin: 273px 0 auto; }

.taskbar { display: flex; align-items: stretch; }
.start { display: flex; align-items: center; justify-content: center; }
.search { display: flex; align-items: center; color: #333; font-size: 15px; }
.church { margin-left: auto; }
.apps { display: flex; }
.apps b { display: flex; align-items: center; justify-content: center; position: relative; }
.tray { display: flex; align-items: center; margin-left: auto; }
.clock { display: flex; flex-direction: column; align-items: center; font-size: 12px; line-height: 20px; }
.remote-bar { height: 42px; background: #dad9d7; color: #222; border-top: 1px solid #d0cfcc; }
.remote-bar .start { width: 51px; color: #000; }
.remote-bar .search { width: 306px; background: #fff; padding: 0 5px 2px 13px; }
.remote-bar .start, .remote-bar .apps b { padding-bottom: 2px; }
.remote-bar .search > span { margin-left: 12px; }
.remote-bar .apps b { width: 52.800px; }
.remote-bar .apps .taskview { width: 54px; }
.remote-bar .run { background: linear-gradient(#1877c5, #1877c5) 5px 38px / 43px 3px no-repeat; }
.remote-bar .run.on { background: linear-gradient(#1877c5, #1877c5) 0 38px / 51px 3px no-repeat, linear-gradient(90deg, #efefee 48px, #dad9d7 48px); }
.remote-bar .weather { font-size: 15px; margin: 0 0 2px 11.500px; width: 81px; }
.remote-bar .caret { margin-left: 26px; }
.remote-bar .wifi { margin-left: 12px; }
.remote-bar .warn { margin: 0 0 2px 8px; }
.remote-bar .vol { margin: 0 0 2px 9px; }
.lang { font-size: 13px; }
.remote-bar .lang { margin: 0 0 2px 12px; width: 24px; }
.remote-bar .clock { margin: 0 0 2px 13px; width: 60px; }
.remote-bar .note { margin: 0 26px 3px 19px; }

.host-bar { height: 39px; flex: none; background: linear-gradient(90deg, #1d2c36, #26353e 20%, #2a3840 45%, #24343c 60%, #283840 80%, #202f39); color: #fff; }
.host-bar .start { width: 48px; }
.host-bar .search { width: 288px; background: #f2f2f2; border-top: 1px solid #c8cccf; padding: 0 7px 0 12px; }
.host-bar .search > span { margin-left: 12px; }
.host-bar .apps { margin-left: 2px; }
.host-bar .apps b { width: 49px; background: linear-gradient(#76b5e9, #76b5e9) 5px 37px / 40px 2px no-repeat; }
.host-bar .apps .on { background: linear-gradient(#76b5e9, #76b5e9) 0 37px / 49px 2px no-repeat, #56636b; }
.count { position: absolute; right: 3px; bottom: 4px; width: 17px; height: 17px; border-radius: 9px; background: #eb4242; font: 400 11.500px/17px "Open Sans", sans-serif; text-align: center; }
.acct { background: #c0135c; right: 4px; font-size: 10px; }
.host-bar .sync { margin-left: 9px; }
.host-bar .wifi { margin-left: 10px; }
.host-bar .vol { margin-left: 7px; }
.host-bar .lang { margin-left: 9px; width: 23px; }
.host-bar .clock { margin-left: 13px; width: 54px; font-size: 11.500px; line-height: 18.500px; }
.host-bar .note { position: relative; margin: 0 19px 2px 19px; }
.note i { position: absolute; left: 8px; top: 6px; width: 17px; height: 17px; border: 1px solid #a5adb1; border-radius: 50%; background: #2d3438; font: 400 12px/15px "Open Sans", sans-serif; text-align: center; }
.host-bar .tray { border-right: 1px solid #75808a; margin-right: 3px; }

.popup { position: absolute; left: 541px; top: 0; width: 858px; height: 871px; border: 1px solid #858b99; background: #f9fcff; overflow: hidden; display: flex; flex-direction: column; }
.ptitle { height: 32px; background: #d6e2ff; border-bottom: 1px solid #adb5cd; display: flex; align-items: center; padding: 0 0 1px 5px; font-size: 12.800px; color: #202432; }
.ptitle > span { margin: 0 0 1px 7.500px; }
.pcontrols { display: flex; gap: 37px; margin: 0 18.500px 0 auto; }
.purl { height: 35px; background: #ebeffc; border-bottom: 1px solid #b7bac9; display: flex; align-items: center; padding-left: 5px; }
.purl .site { width: 25px; height: 25px; }
.purl .url { margin-left: 9px; font-size: 15px; }
.purl .tr { margin: 0 17px 0 auto; }
.login { display: flex; flex-direction: column; align-items: center; padding-top: 138px; }
h1 { display: flex; flex-direction: column; align-items: center; margin-top: 16px; font-size: 16.300px; font-weight: 500; line-height: 22px; color: #111827; -webkit-text-stroke: .35px #111827; }
.card { margin-top: 15px; width: 661px; height: 348px; border-radius: 9px; background: #fff; box-shadow: 0 1px 3px rgba(40, 60, 90, .18); padding: 25px 25.500px 0; }
.methods { display: flex; justify-content: space-between; }
.method { width: 140px; height: 54px; border: 1px solid #eaecef; border-radius: 7px; display: flex; align-items: center; padding-left: 17px; color: #333a45; font-size: 15px; }
.ring { width: 35px; height: 35px; border-radius: 50%; border: 1px solid #e6e8ec; display: flex; align-items: center; justify-content: center; }
.mlabel { margin-left: 11.500px; -webkit-text-stroke: .15px currentColor; }
.method.hover { background: #f9fcff; }
.method.active { background: #eff4ff; border-color: #6289e6; color: #3468e8; }
.method.active .ring { border-color: #3468d8; background: #f8faff; }
.cert { margin-top: 16px; height: 122px; border: 1px solid #7974bc; border-radius: 8px; background: #eef3ff; padding: 20px 30px 0 21px; color: #727985; }
.cert-top { display: flex; justify-content: space-between; line-height: 25px; }
.cert strong { font-size: 15px; font-weight: 500; color: #7169e3; -webkit-text-stroke: .35px #7169e3; }
.cert small { font-size: 12.300px; font-weight: 600; color: #40379a; width: 71px; line-height: 25px; }
.cert p { font-size: 14.700px; line-height: 24px; margin-top: 6px; display: flex; }
.cert .dates { font-size: 12.800px; line-height: 22px; margin-top: 4px; }
.enter { margin-top: 16px; height: 47px; border-radius: 7px; background: #2660eb; color: #fff; display: flex; justify-content: center; align-items: center; font-size: 16px; }
.call { margin-top: 21.500px; display: flex; justify-content: center; gap: 5px; font-size: 14.500px; line-height: 23px; color: #9ca3af; }
.call b { color: #6b7280; font-weight: 600; }

.watermark { position: absolute; left: 1353px; top: 766px; color: rgba(150, 153, 158, .68); font-size: 14.500px; line-height: 21.300px; }
.watermark p { display: flex; }
.watermark .big { font-size: 20.500px; line-height: 28px; }
.cursor { position: absolute; left: 889px; top: 421px; }
</style>
